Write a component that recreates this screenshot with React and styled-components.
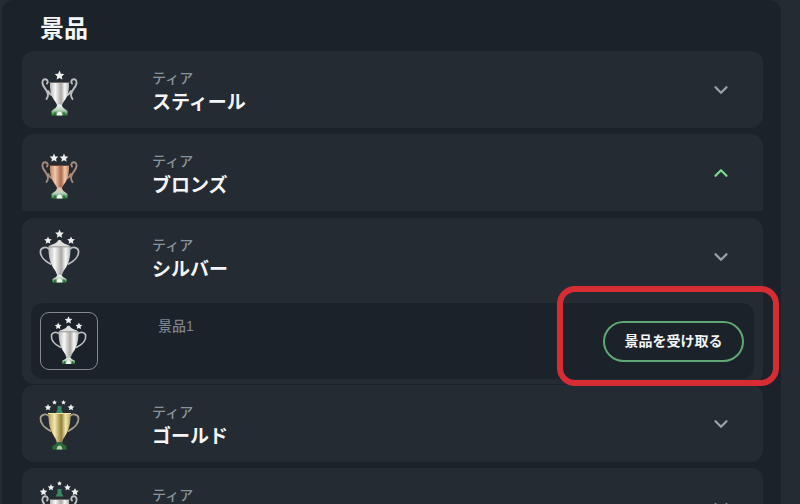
import React, { useState } from 'react';
import styled, { createGlobalStyle } from 'styled-components';
import { ChevronDown, ChevronUp } from 'lucide-react';

const GlobalStyle = createGlobalStyle`
  * {
    box-sizing: border-box;
  }

  body {
    margin: 0;
    background-color: #242b33;
    font-family: 'Liberation Sans', 'Noto Sans CJK JP', sans-serif;
    color: #f4f5f6;
  }
`;

const Page = styled.div`
  height: 100vh;
  overflow: hidden;
  padding: 0 19px 0 2px;
`;

const Panel = styled.main`
  min-height: 100%;
  padding: 11px 18px 20px 20px;
  border-radius: 12px;
  background-color: #1b2229;
`;

const Title = styled.h1`
  margin: 0 0 4px;
  padding-left: 18px;
  font-size: 24px;
  line-height: 36px;
  font-weight: bold;
`;

const Card = styled.section`
  margin-bottom: ${({ $gap }) => $gap}px;
  border-radius: ${({ $flat }) => ($flat ? '12px 12px 0 0' : '12px')};
  background-color: #242b33;
`;

const CardHeader = styled.button`
  display: flex;
  align-items: center;
  gap: 62px;
  width: 100%;
  height: 77px;
  padding: 0 31px 0 8px;
  border: none;
  background: none;
  color: ${({ $green }) => ($green ? '#7bd88f' : '#9ba1a8')};
  font-family: inherit;
  text-align: left;
  cursor: pointer;
`;

const TierText = styled.span`
  display: flex;
  flex: 1;
  flex-direction: column;
  padding-top: 3px;
`;

const TierLabel = styled.span`
  font-size: 14px;
  line-height: 24px;
  font-weight: 500;
  color: #8b929a;
`;

const TierName = styled.span`
  min-height: 26px;
  font-size: 19px;
  line-height: 26px;
  font-weight: bold;
  color: #f4f5f6;
`;

const CardBody = styled.div`
  padding: 8px 9px 5px;
`;

const PrizeRow = styled.div`
  position: relative;
  display: flex;
  align-items: center;
  gap: 60px;
  height: 76px;
  padding: 0 10px 0 9px;
  border-radius: 12px;
  background-color: #1b2229;
`;

const PrizeImage = styled.div`
  display: flex;
  align-items: center;
  justify-content: center;
  width: 58px;
  height: 58px;
  border: 1px solid #858990;
  border-radius: 9px;
`;

const PrizeName = styled.span`
  flex: 1;
  align-self: flex-start;
  padding-top: 13px;
  font-size: 14px;
  line-height: 20px;
  font-weight: 500;
  color: #7d848c;
`;

const ClaimButton = styled.button`
  width: 141px;
  height: 41px;
  padding: 0 0 2px;
  border: 2px solid #5fa873;
  border-radius: 21px;
  background: none;
  color: #f4f5f6;
  font-family: inherit;
  font-size: 14px;
  font-weight: bold;
  cursor: pointer;
`;

/* marks the claim button, sits on top of the card edges */
const Highlight = styled.div`
  position: absolute;
  top: -17px;
  right: -25px;
  bottom: -7px;
  width: 222px;
  border: 6px solid #d82c34;
  border-radius: 18px;
  pointer-events: none;
  z-index: 1;
`;

const METALS = {
  silver: { dark: '#b4b4b3', light: '#f8f8f7', shade: '#a9a8a6', handle: '#bcbebf', rim: '#6f6d6c' },
  bronze: { dark: '#c08667', light: '#f3c8ac', shade: '#a9694a', handle: '#a58a7c', rim: '#6b4a3a' },
  gold: { dark: '#b3a05a', light: '#f3e9ac', shade: '#94803c', handle: '#a9a18d', rim: '#f1e5a5' },
};

const STAR = 'M0 -1 L.29 -.36 L.95 -.31 L.45 .2 L.59 .81 L0 .5 L-.59 .81 L-.45 .2 L-.95 -.31 L-.29 -.36 Z';

const BOWLS = {
  scroll: 'M20 22.5h19c.2 5-.3 11-2.500 15-1.500 3-3.500 4.500-4.500 7.500h-5c-1-3-3-4.500-4.500-7.500-2.200-4-2.700-10-2.500-15z',
  lid: 'M18.500 19.500h22c.2 6-.5 13-3 18-1.500 4-4.500 6-5.500 10.500h-5c-1-4.500-4-6.500-5.500-10.500-2.500-5-3.200-12-3-18z',
  loop: 'M18.500 19.500h22c.2 6-.5 13-3 18-1.500 4-5 7-5.500 12h-5c-.5-5-4-8-5.500-12-2.500-5-3.200-12-3-18z',
};

const Trophy = ({ id, metal, stars, shape, knob, size = 60 }) => {
  const { dark, light, shade, handle, rim } = METALS[metal];
  const scroll = shape === 'scroll';

  return (
    <svg width={size} height={size} viewBox="0 0 60 60" aria-hidden="true">
      <defs>
        <linearGradient id={`metal-${id}`}>
          <stop offset="0" stopColor={dark} />
          <stop offset=".28" stopColor={light} />
          <stop offset=".58" stopColor={shade} />
          <stop offset=".78" stopColor={light} />
          <stop offset="1" stopColor={dark} />
        </linearGradient>
        <linearGradient id={`foot-${id}`} x1="0" y1="0" x2="0" y2="1">
          <stop offset="0" stopColor={light} />
          <stop offset=".5" stopColor="#b9d3ba" />
          <stop offset="1" stopColor="#2a7a38" />
        </linearGradient>
      </defs>
      {stars.map(([x, y, r]) => (
        <path key={x} d={STAR} fill="#f0f0ee" transform={`translate(${x} ${y}) scale(${r})`} />
      ))}
      {knob && <path d="M27.500 12h4v4l2 3.500h-8l2-3.500z" fill="#3c8763" />}
      {scroll ? (
        <g fill="none" stroke={handle} strokeWidth="1.900" strokeLinecap="round">
          <path d="M17 23.500c1.300-1.200.8-3.800-1.500-4.200-3-.3-3.700 3-2.500 5.700 1.500 3.500 4.500 5.500 5 9.500.1 1.800-.6 3.300-1.500 4.500M23 36c-2-1-4-3-5-5" />
          <path d="M42 23.500c-1.300-1.200-.8-3.800 1.500-4.200 3-.3 3.700 3 2.500 5.700-1.500 3.500-4.500 5.500-5 9.500-.1 1.800.6 3.300 1.500 4.500M36 36c2-1 4-3 5-5" />
        </g>
      ) : (
        <g fill="none" stroke={handle} strokeWidth="1.800" strokeLinecap="round">
          <path d="M19 22c-2.500-2.500-8-2-8.500 2-.5 5 4 10 10 13" />
          <path d="M40 22c2.500-2.500 8-2 8.500 2 .5 5-4 10-10 13" />
        </g>
      )}
      <path d={BOWLS[shape]} fill={`url(#metal-${id})`} />
      {shape === 'lid' ? (
        <>
          <path d="M18.500 19.500c2-2 7-2.500 9-5 0-2 4-2 4 0 2 2.500 7 3 9 5z" fill="#dfdfdd" />
          <path d="M18.500 20h22" stroke="#a3a3a2" strokeWidth=".8" />
        </>
      ) : (
        <path d={scroll ? 'M19.500 22.500h20' : 'M18 19.500h23'} stroke={rim} strokeWidth="1" />
      )}
      <path
        d={
          scroll
            ? 'M27.500 44.500h4l1.500 3 4.500 3.500v4.500h-16v-4.500l4.500-3.500z'
            : 'M27.500 48h4l1.500 2 3.500 2v3.500h-14v-3.500l3.500-2z'
        }
        fill={metal === 'gold' ? '#2c6a37' : `url(#foot-${id})`}
      />
      <path d="M26.500 55.500c.4-2.500 1.500-4 3-4s2.600 1.500 3 4z" fill={metal === 'gold' ? '#b8d0a6' : '#f0f6ee'} />
      <path d="M24 55.500l1.500-3M35 55.500l-1.500-3" stroke="#1f6e30" strokeWidth="1.500" />
    </svg>
  );
};

const SILVER_CUP = { metal: 'silver', shape: 'lid', stars: [[18, 13.5, 4], [29.5, 7, 4.500], [41, 13.5, 4]] };

const TIERS = [
  {
    id: 'steel',
    name: 'スティール',
    gap: 6,
    cup: { metal: 'silver', shape: 'scroll', stars: [[29.5, 15.5, 5]] },
  },
  {
    id: 'bronze',
    name: 'ブロンズ',
    gap: 7,
    open: true,
    cup: { metal: 'bronze', shape: 'scroll', stars: [[24, 15, 4.500], [34, 15, 4.500]] },
  },
  { id: 'silver', name: 'シルバー', gap: 1, cup: SILVER_CUP, prizes: ['景品1'] },
  {
    id: 'gold',
    name: 'ゴールド',
    gap: 6,
    cup: {
      metal: 'gold',
      shape: 'loop',
      knob: true,
      stars: [[18, 13.5, 3.500], [24.5, 8.5, 2.500], [33.5, 8.5, 2.500], [41, 13.5, 3.500]],
    },
  },
  {
    id: 'locked',
    gap: 6,
    cup: {
      metal: 'silver',
      shape: 'scroll',
      knob: true,
      stars: [[13.5, 15, 4], [21, 10.5, 3.500], [29.5, 6.5, 2.500], [37.5, 10.5, 3.500], [45, 15, 4]],
    },
  },
];

const Tier = ({ tier }) => {
  const [open, setOpen] = useState(Boolean(tier.open));
  const Chevron = open ? ChevronUp : ChevronDown;

  return (
    <Card $gap={tier.gap} $flat={open}>
      <CardHeader type="button" aria-expanded={open} $green={open} onClick={() => setOpen(!open)}>
        <Trophy id={tier.id} {...tier.cup} />
        <TierText>
          <TierLabel>ティア</TierLabel>
          <TierName>{tier.name}</TierName>
        </TierText>
        <Chevron size={22} strokeWidth={2.5} />
      </CardHeader>
      {tier.prizes && (
        <CardBody>
          {tier.prizes.map((prize) => (
            <PrizeRow key={prize}>
              <PrizeImage>
                <Trophy id={`${tier.id}-prize`} {...tier.cup} size={54} />
              </PrizeImage>
              <PrizeName>{prize}</PrizeName>
              <ClaimButton type="button">景品を受け取る</ClaimButton>
              <Highlight />
            </PrizeRow>
          ))}
        </CardBody>
      )}
    </Card>
  );
};

const App = () => (
  <>
    <GlobalStyle />
    <Page>
      <Panel>
        <Title>景品</Title>
        {TIERS.map((tier) => (
          <Tier key={tier.id} tier={tier} />
        ))}
      </Panel>
    </Page>
  </>
);

export default App;
